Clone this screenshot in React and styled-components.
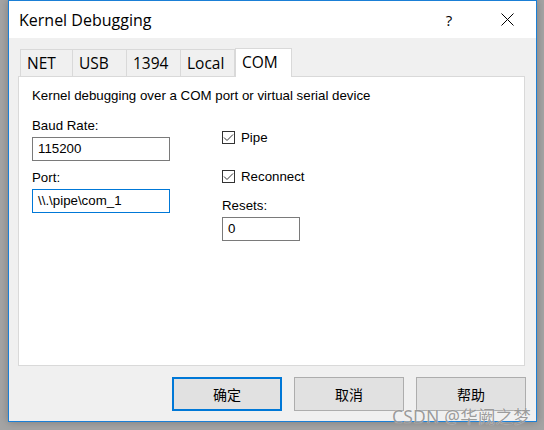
import React from "react"
import styled, { createGlobalStyle } from "styled-components"

const Global = createGlobalStyle`
  html, body {
    margin: 0;
    padding: 0;
    background: #a4a4a4;
  }
  body {
    width: 544px;
    height: 430px;
    overflow: hidden;
    font-family: "Liberation Sans", Arial, sans-serif;
  }
`

//  window frame
const Window = styled.div`
  position: relative;
  box-sizing: border-box;
  width: 529px;
  height: 422px;
  margin-left: 8px;
  border: 1px solid #1a7fd6;
  background: #f0f0f0;
  display: flex;
  flex-direction: column;
  box-shadow: 0 0 8px rgba(0, 0, 0, 0.25);
`

const TitleBar = styled.div`
  height: 37px;
  background: #fff;
  display: flex;
  align-items: center;
  padding-left: 10px;
  font-family: "Open Sans", "Noto Sans", sans-serif;
  font-size: 16px;
  color: #000;
`

const Title = styled.div`
  flex: 1;
`

const Help = styled.div`
  width: 58px;
  text-align: center;
  font-size: 15px;
`

const Close = styled.div`
  width: 58px;
  display: flex;
  justify-content: center;
`

const Body = styled.div`
  flex: 1;
  padding: 10px 11px 0 9px;
  display: flex;
  flex-direction: column;
`

const Tabs = styled.div`
  display: flex;
  align-items: flex-end;
  margin-left: 2px;
  height: 28px;
  position: relative;
  z-index: 1;
`

const Tab = styled.div`
  box-sizing: border-box;
  width: ${p => p.w}px;
  height: ${p => (p.active ? "29px" : "27px")};
  margin-bottom: ${p => (p.active ? "-1px" : "0")};
  padding-left: 6px;
  border: 1px solid #d9d9d9;
  border-bottom: none;
  border-left: ${p => (p.first || p.active ? "1px solid #d9d9d9" : "none")};
  background: ${p => (p.active ? "#fff" : "#f0f0f0")};
  font-family: "Open Sans", "Noto Sans", sans-serif;
  font-size: 15.5px;
  line-height: 27px;
  color: #000;
  white-space: nowrap;
`

const Panel = styled.div`
  box-sizing: border-box;
  height: 290px;
  background: #fff;
  border: 1px solid #d9d9d9;
  padding: 11px 13px;
  font-size: 13.3px;
  color: #000;
`

const Desc = styled.div`
  line-height: 15px;
  margin-bottom: 15px;
`

const Form = styled.div`
  display: grid;
  grid-template-columns: 190px 1fr;
`

const Column = styled.div`
  display: flex;
  flex-direction: column;
`

const Label = styled.div`
  line-height: 15px;
  margin-top: ${p => p.mt || 0}px;
  margin-bottom: 4px;
`

const Input = styled.div`
  box-sizing: border-box;
  width: ${p => p.w}px;
  height: 24px;
  border: 1px solid ${p => (p.focus ? "#0078d7" : "#7a7a7a")};
  padding-left: 5px;
  line-height: 22px;
  margin-bottom: ${p => p.mb || 0}px;
`

const Check = styled.div`
  display: flex;
  align-items: center;
  height: 15px;
  margin-top: ${p => p.mt}px;
  gap: 6px;
`

const Box = styled.div`
  box-sizing: border-box;
  width: 13px;
  height: 13px;
  border: 1px solid #333;
  display: flex;
  align-items: center;
  justify-content: center;
`

const Buttons = styled.div`
  display: flex;
  justify-content: flex-end;
  gap: 12px;
  margin-top: 11px;
  margin-right: -1px;
`

const Button = styled.div`
  box-sizing: border-box;
  width: 110px;
  height: 34px;
  background: #e1e1e1;
  border: ${p => (p.primary ? "2px solid #0078d7" : "1px solid #adadad")};
  display: flex;
  align-items: center;
  justify-content: center;
  font-family: "Noto Sans CJK SC", sans-serif;
  font-size: 14px;
  color: #000;
`

const Watermark = styled.div`
  position: absolute;
  right: 5px;
  bottom: -7px;
  font-family: "Noto Sans", "Noto Sans CJK SC", sans-serif;
  font-size: 17.5px;
  letter-spacing: 0.2px;
  color: rgba(130, 130, 130, 0.8);
  text-shadow: 0 0 1px rgba(255, 255, 255, 0.9);
`

const Tick = () => (
  <svg width="11" height="11" viewBox="0 0 11 11">
    <path d="M1 5.5 L4 8.5 L10 2.5" fill="none" stroke="#333" strokeWidth="1" />
  </svg>
)

const tabs = [
  { name: "NET", w: 53 },
  { name: "USB", w: 54 },
  { name: "1394", w: 54 },
  { name: "Local", w: 54 },
  { name: "COM", w: 57, active: true },
]

const App = () => {
  return (
    <Window>
      <Global />
      <TitleBar>
        <Title>Kernel Debugging</Title>
        <Help>?</Help>
        <Close>
          <svg width="13" height="13" viewBox="0 0 13 13">
            <path d="M0.5 0.5 L12.5 12.5 M12.5 0.5 L0.5 12.5" stroke="#000" strokeWidth="1" />
          </svg>
        </Close>
      </TitleBar>
      <Body>
        <Tabs>
          {tabs.map((t, i) => (
            <Tab key={t.name} first={i === 0} active={t.active} w={t.w}>
              {t.name}
            </Tab>
          ))}
        </Tabs>
        <Panel>
          <Desc>Kernel debugging over a COM port or virtual serial device</Desc>
          <Form>
            <Column>
              <Label>Baud Rate:</Label>
              <Input w={138} mb={9}>115200</Input>
              <Label>Port:</Label>
              <Input w={138} focus>\\.\pipe\com_1</Input>
            </Column>
            <Column>
              <Check mt={12}>
                <Box><Tick /></Box>
                Pipe
              </Check>
              <Check mt={24}>
                <Box><Tick /></Box>
                Reconnect
              </Check>
              <Label mt={14}>Resets:</Label>
              <Input w={78}>0</Input>
            </Column>
          </Form>
        </Panel>
        <Buttons>
          <Button primary>确定</Button>
          <Button>取消</Button>
          <Button>帮助</Button>
        </Buttons>
      </Body>
      <Watermark>CSDN @华阙之梦</Watermark>
    </Window>
  )
}

export default App
